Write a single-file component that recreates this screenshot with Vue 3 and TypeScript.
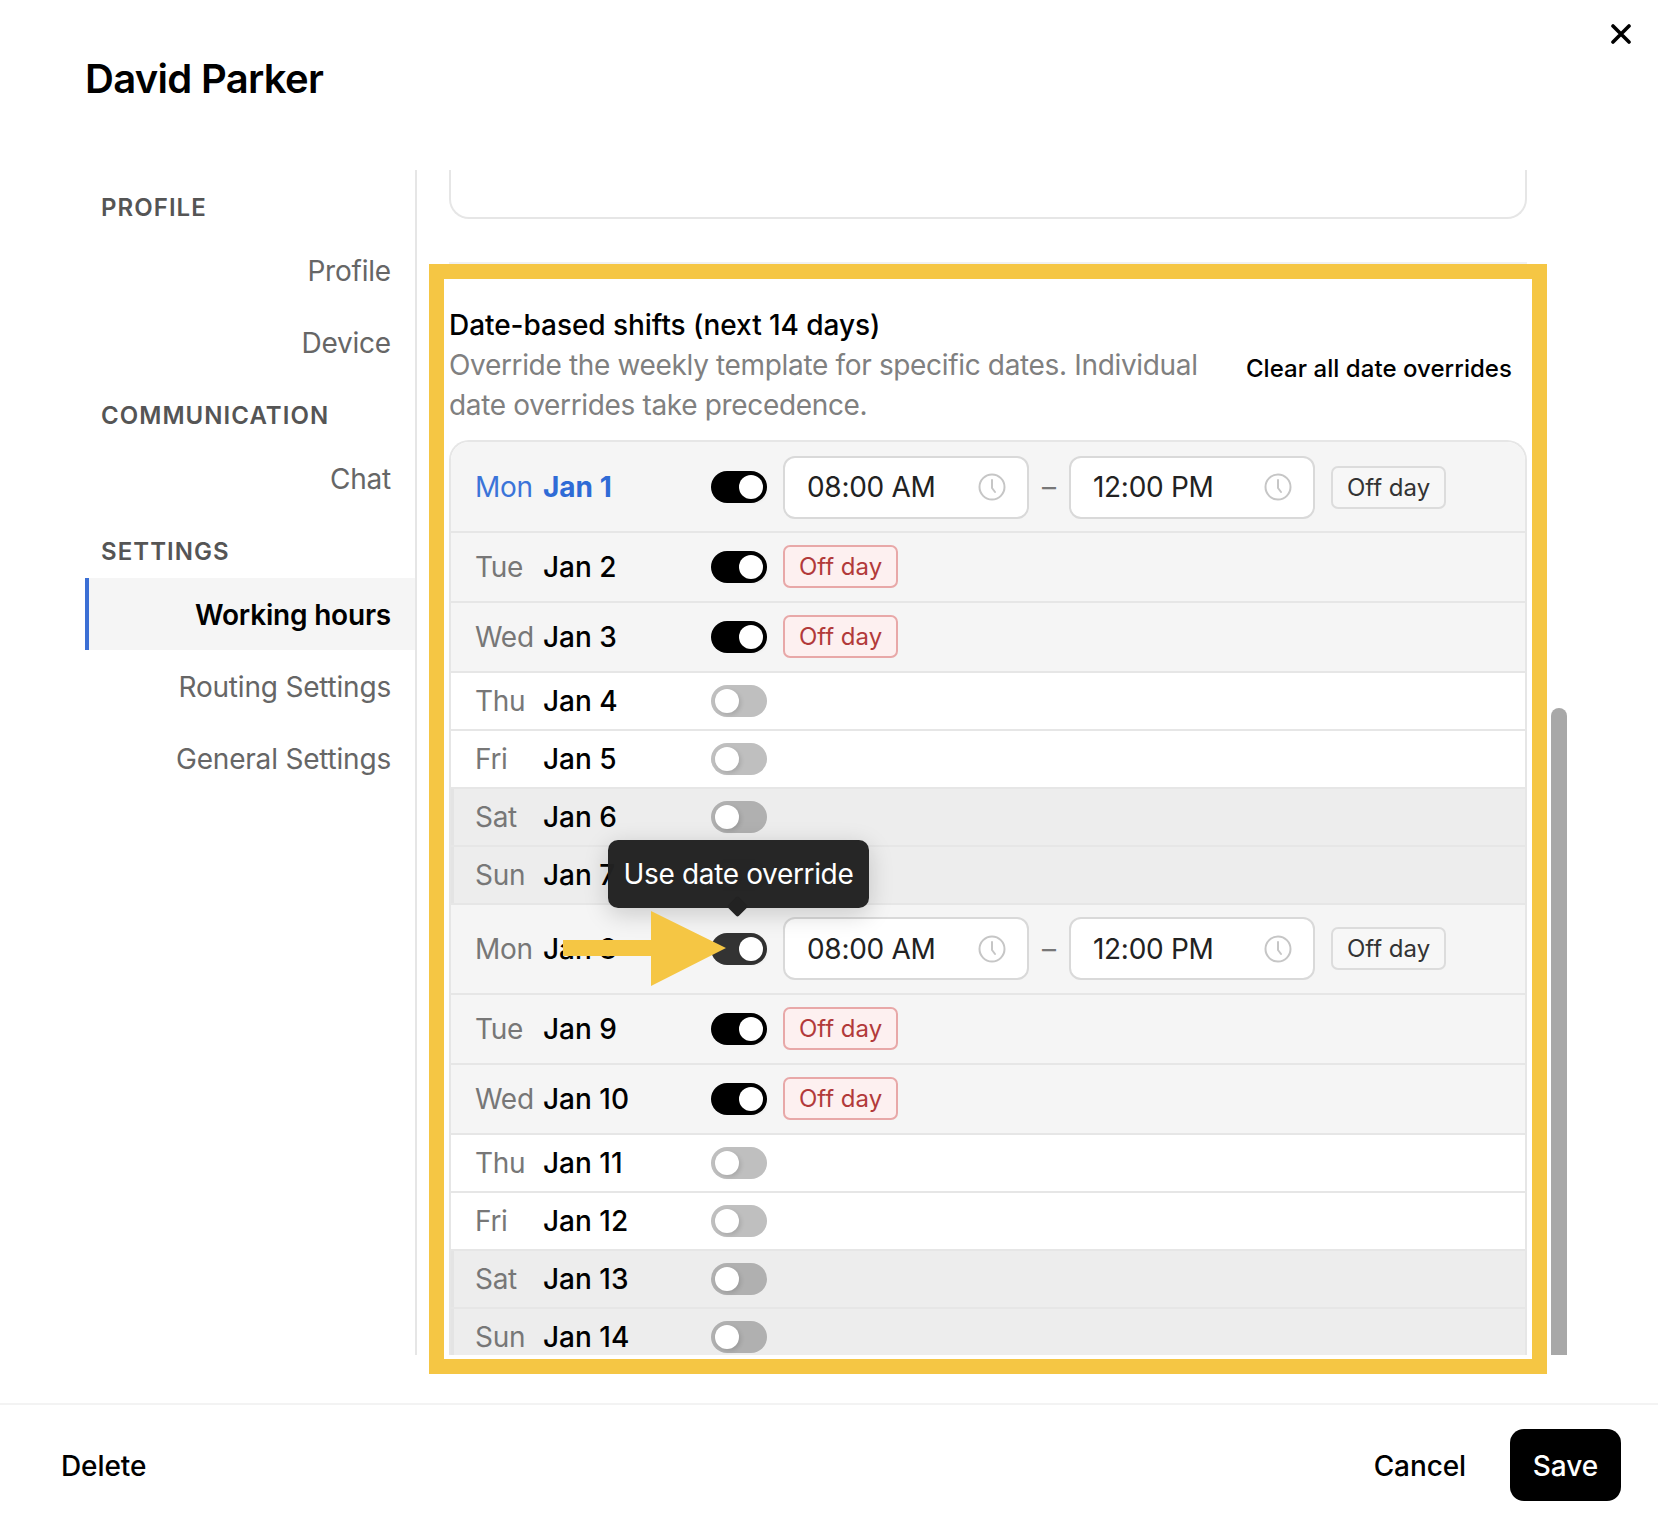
<script setup lang="ts">
type Row = { day: string; date: string; kind: 'times' | 'off' | 'closed'; tone: 'work' | 'plain' | 'weekend'; cls?: string }
const rows: Row[] = [
  { day: 'Mon', date: 'Jan 1', kind: 'times', tone: 'work', cls: 'today' },
  { day: 'Tue', date: 'Jan 2', kind: 'off', tone: 'work' },
  { day: 'Wed', date: 'Jan 3', kind: 'off', tone: 'work' },
  { day: 'Thu', date: 'Jan 4', kind: 'closed', tone: 'plain' },
  { day: 'Fri', date: 'Jan 5', kind: 'closed', tone: 'plain' },
  { day: 'Sat', date: 'Jan 6', kind: 'closed', tone: 'weekend' },
  { day: 'Sun', date: 'Jan 7', kind: 'closed', tone: 'weekend' },
  { day: 'Mon', date: 'Jan 8', kind: 'times', tone: 'work', cls: 'hover' },
  { day: 'Tue', date: 'Jan 9', kind: 'off', tone: 'work' },
  { day: 'Wed', date: 'Jan 10', kind: 'off', tone: 'work' },
  { day: 'Thu', date: 'Jan 11', kind: 'closed', tone: 'plain' },
  { day: 'Fri', date: 'Jan 12', kind: 'closed', tone: 'plain' },
  { day: 'Sat', date: 'Jan 13', kind: 'closed', tone: 'weekend' },
  { day: 'Sun', date: 'Jan 14', kind: 'closed', tone: 'weekend' },
]
const nav = [
  { label: 'PROFILE', items: ['Profile', 'Device'] },
  { label: 'COMMUNICATION', items: ['Chat'] },
  { label: 'SETTINGS', items: ['Working hours', 'Routing Settings', 'General Settings'] },
]
</script>

<template>
  <div class="modal">
    <header class="head">
      <h1 class="title">David Parker</h1>
      <svg class="close" viewBox="0 0 20 20" width="20" height="20" aria-label="Close">
        <path d="M2 2 18 18M18 2 2 18" stroke="#000" stroke-width="3.6" stroke-linecap="round" fill="none" />
      </svg>
    </header>

    <div class="body">
      <nav class="side">
        <template v-for="g in nav" :key="g.label">
          <div class="group">{{ g.label }}</div>
          <div v-for="i in g.items" :key="i" class="item" :class="{ active: i === 'Working hours' }">{{ i }}</div>
        </template>
      </nav>

      <main class="content">
        <div class="card-end"></div>
        <section class="shifts">
          <div class="intro">
            <div class="intro-text">
              <div class="h2">Date-based shifts (next 14 days)</div>
              <p class="sub">Override the weekly template for specific dates. Individual date overrides take precedence.</p>
            </div>
            <button class="clear">Clear all date overrides</button>
          </div>

          <div class="list">
            <div v-for="r in rows" :key="r.date" class="row" :class="[r.tone, r.cls, 'k-' + r.kind]">
              <span class="day">{{ r.day }}</span>
              <span class="date">{{ r.date }}</span>
              <span class="toggle" :class="{ on: r.kind !== 'closed' }"><i class="knob"></i></span>
              <template v-if="r.kind === 'times'">
                <div class="time">
                  <span>08:00 AM</span>
                  <svg class="clock" viewBox="0 0 28 28" width="28" height="28">
                    <circle cx="14" cy="14" r="12.5" fill="none" stroke="#c6c6c6" stroke-width="2" />
                    <path d="M14 7v8l3 4" fill="none" stroke="#c6c6c6" stroke-width="2" stroke-linecap="round" stroke-linejoin="round" />
                  </svg>
                </div>
                <span class="dash">–</span>
                <div class="time">
                  <span>12:00 PM</span>
                  <svg class="clock" viewBox="0 0 28 28" width="28" height="28">
                    <circle cx="14" cy="14" r="12.5" fill="none" stroke="#c6c6c6" stroke-width="2" />
                    <path d="M14 7v8l3 4" fill="none" stroke="#c6c6c6" stroke-width="2" stroke-linecap="round" stroke-linejoin="round" />
                  </svg>
                </div>
                <button class="off-btn">Off day</button>
              </template>
              <span v-else-if="r.kind === 'off'" class="off-tag">Off day</span>
            </div>
          </div>
        </section>
      </main>
      <div class="thumb"></div>
    </div>

    <footer class="foot">
      <button class="link">Delete</button>
      <div class="actions">
        <button class="link">Cancel</button>
        <button class="save">Save</button>
      </div>
    </footer>

    <div class="frame"></div>
    <div class="tip">Use date override</div>
    <svg class="arrow" viewBox="0 0 170 80" width="170" height="80">
      <path d="M0 29H88V0L163 37 88 75V45H0Z" fill="#f5c644" />
    </svg>
  </div>
</template>

<style>
html, body { margin: 0; background: #fff; }
</style>

<style scoped>
.modal {
  position: relative;
  width: 1658px;
  height: 1514px;
  overflow: hidden;
  display: flex;
  flex-direction: column;
  background: #fff;
  color: #000;
  font-family: Inter, "Liberation Sans", sans-serif;
  font-size: 28px;
}
button { font: inherit; background: none; border: 0; padding: 0; color: inherit; }
.head {
  height: 170px;
  flex: none;
  display: flex;
  justify-content: space-between;
  align-items: flex-start;
  padding-left: 85px;
  padding-right: 27px;
  box-sizing: border-box;
}
.title { margin: 55px 0 0; font-size: 40px; line-height: 48px; font-weight: 600; letter-spacing: -0.7px; }
.close { margin-top: 24px; }
.body {
  position: relative;
  height: 1185px;
  flex: none;
  display: flex;
  padding-left: 85px;
  overflow: hidden;
}
.side {
  width: 330px;
  flex: none;
  border-right: 2px solid #e6e6e6;
}
.group {
  height: 64px;
  box-sizing: border-box;
  padding: 20px 0 0 16px;
  font-size: 24px;
  line-height: 35px;
  font-weight: 600;
  letter-spacing: 1.05px;
  color: #555;
}
.item {
  height: 72px;
  line-height: 74px;
  text-align: right;
  padding-right: 24px;
  color: #666;
  letter-spacing: -0.2px;
}
.item.active {
  background: #f5f5f5;
  border-left: 4px solid #3b6fd4;
  color: #000;
  font-weight: 600;
}
.content { flex: 1; min-width: 0; padding: 0 131px 0 32px; }
.card-end {
  height: 49px;
  box-sizing: border-box;
  border: 2px solid #e6e6e6;
  border-top: 0;
  border-radius: 0 0 20px 20px;
}
.shifts {
  margin-top: 43px;
  padding-top: 41px;
  border-top: 2px solid #f1f1f1;
}
.intro { display: flex; justify-content: space-between; padding-right: 15px; }
.intro-text { width: 760px; }
.h2 { line-height: 40px; font-weight: 500; letter-spacing: -0.05px; }
.sub { margin: 0; line-height: 40px; color: #808080; letter-spacing: -0.34px; }
.clear { align-self: center; margin-top: 6px; font-size: 24px; font-weight: 500; letter-spacing: 0.05px; white-space: nowrap; }
.list {
  margin-top: 15px;
  border: 2px solid #e6e6e6;
  border-bottom: 0;
  border-radius: 20px 20px 0 0;
  overflow: hidden;
}
.row {
  display: flex;
  align-items: center;
  padding-left: 24px;
  padding-bottom: 1px;
  box-sizing: border-box;
  border-top: 2px solid #e6e6e6;
  flex: none;
}
.row:first-child { border-top: 0; padding-bottom: 0; padding-top: 1px; height: 89px; }
.k-times { height: 90px; }
.k-off { height: 70px; }
.k-closed { height: 58px; }
.work { background: #f5f5f5; }
.plain { background: #fff; }
.weekend { background: #ededed; box-shadow: inset 3px 0 0 #e4e4e4; }
.day { width: 68px; color: #777; flex: none; letter-spacing: -0.3px; }
.date { width: 168px; font-weight: 500; flex: none; }
.today .day { color: #3b74d9; }
.today .date { color: #2f6bd6; font-weight: 700; }
.toggle {
  width: 56px;
  height: 32px;
  border-radius: 16px;
  background: #bfbfbf;
  flex: none;
  padding: 4px;
  box-sizing: border-box;
  display: flex;
}
.weekend .toggle { background: #b0b0b0; }
.toggle.on { background: #000; justify-content: flex-end; }
.hover .toggle.on { background: #333; }
.knob {
  width: 24px;
  height: 24px;
  border-radius: 50%;
  background: #fff;
  box-shadow: 2px 2px 4px rgba(0, 0, 0, 0.12);
}
.time {
  width: 246px;
  height: 63px;
  margin-left: 16px;
  box-sizing: border-box;
  background: #fff;
  border: 2px solid #d9d9d9;
  border-radius: 12px;
  display: flex;
  align-items: center;
  justify-content: space-between;
  padding: 0 21px 0 22px;
  color: #222;
  letter-spacing: -0.3px;
  flex: none;
}
.dash { width: 40px; margin-right: -16px; text-align: center; color: #777; flex: none; }
.off-btn {
  width: 115px;
  height: 43px;
  margin-left: 16px;
  box-sizing: border-box;
  border: 2px solid #dcdcdc;
  border-radius: 7px;
  background: #f7f7f7;
  font-size: 24px;
  color: #333;
  flex: none;
}
.off-tag {
  width: 115px;
  height: 43px;
  margin-left: 16px;
  box-sizing: border-box;
  border: 2px solid #e8a8a8;
  border-radius: 7px;
  background: #fdf0f0;
  color: #b23a3a;
  font-size: 24px;
  display: flex;
  align-items: center;
  justify-content: center;
  flex: none;
}
.thumb {
  position: absolute;
  right: 91px;
  top: 538px;
  bottom: 0;
  width: 16px;
  background: #a8a8a8;
  border-radius: 8px 8px 0 0;
}
.foot {
  height: 111px;
  flex: none;
  margin-top: 48px;
  box-sizing: border-box;
  border-top: 2px solid #f3f3f3;
  padding: 24px 37px 0 61px;
  display: flex;
  justify-content: space-between;
  align-items: flex-start;
}
.actions { display: flex; gap: 44px; }
.link { height: 74px; font-weight: 500; letter-spacing: -0.1px; }
.save {
  width: 111px;
  height: 72px;
  padding-top: 2px;
  background: #000;
  color: #fff;
  border-radius: 14px;
  font-weight: 500;
}
.frame {
  position: absolute;
  left: 429px;
  top: 264px;
  width: 1118px;
  height: 1110px;
  box-sizing: border-box;
  border: 15px solid #f5c644;
  pointer-events: none;
}
.tip {
  position: absolute;
  left: 608px;
  top: 840px;
  width: 261px;
  height: 68px;
  line-height: 69px;
  text-align: center;
  background: rgba(34, 34, 34, 0.98);
  color: #fff;
  border-radius: 10px;
  box-shadow: 0 6px 24px rgba(0, 0, 0, 0.18);
  letter-spacing: -0.35px;
  white-space: nowrap;
}
.tip::after {
  content: "";
  position: absolute;
  left: 122px;
  bottom: -6px;
  width: 15px;
  height: 15px;
  background: #222;
  transform: rotate(45deg);
  border-radius: 2px;
}
.arrow { position: absolute; left: 563px; top: 911px; }
</style>
